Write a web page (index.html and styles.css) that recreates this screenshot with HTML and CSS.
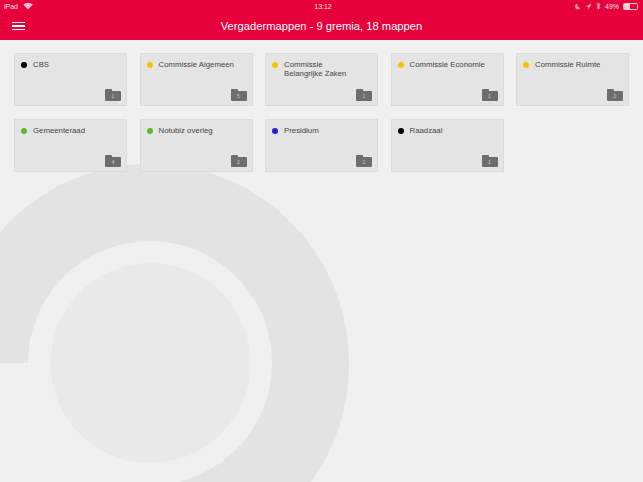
FILE: index.html
```html
<!DOCTYPE html>
<html lang="en">
<head>
    <meta charset="UTF-8">
    <meta name="viewport" content="width=device-width, initial-scale=1.0">
    <title>Vergadermappen</title>
    <link rel="stylesheet" href="styles.css">
</head>
<body>
    <svg class="logo" width="360" height="322" viewBox="0 160 360 322">
        <path class="logo-ring" d="M0 363 H28 A122 122 0 1 1 180 481.3 L183 482 H311 A199 199 0 0 0 349 363 A199 199 0 0 0 0 232 Z"/>
        <circle class="logo-disc" cx="150.5" cy="363" r="100"/>
    </svg>

    <header class="topbar">
        <div class="status">
            <div class="status-left">
                <span>iPad</span>
                <svg width="10" height="8" viewBox="0 0 10 8">
                    <path d="M5 7.6 L0.2 2.6 A7 7 0 0 1 9.8 2.6 Z" fill="#fff" opacity="0.85"/>
                </svg>
            </div>
            <span class="status-time">13:12</span>
            <div class="status-right">
                <svg width="6" height="7" viewBox="0 0 6 7">
                    <path d="M2.5 0.5 A3 3 0 1 0 5.5 5 A3.5 3.5 0 0 1 2.5 0.5 Z" fill="#fff" opacity="0.6"/>
                </svg>
                <svg width="7" height="7" viewBox="0 0 7 7">
                    <path d="M6.5 0.5 L0.5 3.4 H3.4 V6.5 Z" fill="#fff" opacity="0.8"/>
                </svg>
                <svg width="5" height="8" viewBox="0 0 5 8">
                    <path d="M0.5 2 L4 5.4 L2.3 7.2 V0.8 L4 2.6 L0.5 6" fill="none" stroke="#fff" stroke-width="0.7"/>
                </svg>
                <span>49%</span>
                <div class="battery"><div class="battery-level"></div></div>
            </div>
        </div>
        <div class="titlebar">
            <button class="menu-btn"><span></span><span></span><span></span></button>
            <h1>Vergadermappen - 9 gremia, 18 mappen</h1>
        </div>
    </header>

    <main class="grid">
        <div class="card">
            <div class="card-head"><i class="dot black"></i><span>CBS</span></div>
            <div class="folder">1</div>
        </div>
        <div class="card">
            <div class="card-head"><i class="dot yellow"></i><span>Commissie Algemeen</span></div>
            <div class="folder">5</div>
        </div>
        <div class="card">
            <div class="card-head"><i class="dot yellow"></i><span>Commissie<br>Belangrijke Zaken</span></div>
            <div class="folder">1</div>
        </div>
        <div class="card">
            <div class="card-head"><i class="dot yellow"></i><span>Commissie Economie</span></div>
            <div class="folder">1</div>
        </div>
        <div class="card">
            <div class="card-head"><i class="dot yellow"></i><span>Commissie Ruimte</span></div>
            <div class="folder">2</div>
        </div>
        <div class="card">
            <div class="card-head"><i class="dot green"></i><span>Gemeenteraad</span></div>
            <div class="folder">4</div>
        </div>
        <div class="card">
            <div class="card-head"><i class="dot green"></i><span>Notubiz overleg</span></div>
            <div class="folder">2</div>
        </div>
        <div class="card">
            <div class="card-head"><i class="dot blue"></i><span>Presidium</span></div>
            <div class="folder">1</div>
        </div>
        <div class="card">
            <div class="card-head"><i class="dot black"></i><span>Raadzaal</span></div>
            <div class="folder">1</div>
        </div>
    </main>
</body>
</html>
```

FILE: styles.css
```css
html, body {
    height: 100%;
}
body {
    margin: 0;
    background: #f0f0f0;
    font-family: "Liberation Sans", Arial, sans-serif;
    color: #444;
    overflow: hidden;
}
.logo {
    position: absolute;
    left: 0;
    top: 160px;
}
.logo-ring {
    fill: #e3e3e3;
}
.logo-disc {
    fill: #e9e9e9;
}

.topbar {
    position: relative;
    height: 40px;
    background: #e6003c;
    color: #fff;
}
.status {
    display: flex;
    justify-content: space-between;
    align-items: center;
    height: 12px;
    padding: 0 5px 0 4px;
    font-size: 7px;
    opacity: 0.9;
}
.status-left, .status-right {
    display: flex;
    align-items: center;
    gap: 5px;
    width: 80px;
}
.status-left {
    width: 84px;
}
.status-right {
    gap: 4px;
    justify-content: flex-end;
}
.battery {
    width: 13px;
    height: 5px;
    border: 1px solid #fff;
    border-radius: 1.5px;
    opacity: 0.9;
}
.battery-level {
    width: 48%;
    height: 100%;
    background: #fff;
}
.titlebar {
    display: flex;
    align-items: center;
    justify-content: center;
    height: 28px;
}
.titlebar h1 {
    margin: 0;
    font-size: 11.2px;
    font-weight: normal;
}
.menu-btn {
    position: absolute;
    left: 12px;
    top: 21.5px;
    display: flex;
    flex-direction: column;
    gap: 2px;
    width: 13px;
    padding: 0;
    border: 0;
    background: none;
}
.menu-btn span {
    height: 1.5px;
    background: #fff;
}

.grid {
    position: relative;
    display: grid;
    grid-template-columns: repeat(5, 113px);
    grid-auto-rows: 53px;
    column-gap: 12.5px;
    row-gap: 13px;
    padding: 13px 14px;
}
.card {
    position: relative;
    box-sizing: border-box;
    padding: 5.5px 6px;
    background: #e4e4e4;
    border: 1px solid #dbdbdb;
    font-size: 7.8px;
    line-height: 9.5px;
}
.card-head {
    display: flex;
    gap: 6px;
}
.dot {
    flex: none;
    width: 6px;
    height: 6px;
    margin-top: 2px;
    border-radius: 50%;
}
.dot.black { background: #000; }
.dot.yellow { background: #f8c200; }
.dot.green { background: #5cb82a; }
.dot.blue { background: #2222dd; }

.folder {
    position: absolute;
    right: 5px;
    bottom: 4px;
    box-sizing: border-box;
    width: 16px;
    height: 10px;
    background: #6e6e6e;
    border-radius: 0 1px 1px 1px;
    color: #ccc;
    font-size: 5px;
    line-height: 11px;
    text-align: center;
}
.folder::before {
    content: "";
    position: absolute;
    left: 0;
    top: -2px;
    width: 7px;
    height: 2px;
    background: #6e6e6e;
    border-radius: 1px 1px 0 0;
}
```
